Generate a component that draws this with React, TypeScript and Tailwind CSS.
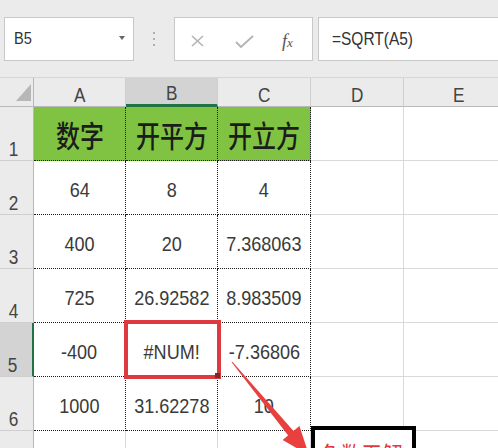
import React from 'react';

const NUM = "font-['Liberation_Sans',Arial,sans-serif]";
const CJK = "font-['Noto_Sans_CJK_SC','Noto_Sans',sans-serif]";

function S({ children, className = '' }: { children: React.ReactNode; className?: string }) {
  return <span className={`inline-block scale-x-[0.86] ${className}`}>{children}</span>;
}

const colW = ['w-[92px]', 'w-[92px]', 'w-[93px]', 'w-[93px]', 'w-[110px]'];
const letters = ['A', 'B', 'C', 'D', 'E'];

const data = [
  ['64', '8', '4'],
  ['400', '20', '7.368063'],
  ['725', '26.92582', '8.983509'],
  ['-400', '#NUM!', '-7.36806'],
  ['1000', '31.62278', '10'],
];

function Toolbar() {
  return (
    <div className="flex h-[78px] shrink-0 items-start border-b border-[#d6d6d6] bg-[#ebebeb] pl-[4px] pt-[17px]">
      <div className="relative flex h-[44px] w-[130px] shrink-0 items-center border border-[#c8c8c8] bg-white pl-[9px]">
        <S className={`origin-left text-[17px] text-[#333] ${NUM}`}>B5</S>
        <span className="absolute left-[114px] top-[18px] h-0 w-0 border-x-[3px] border-t-[4px] border-x-transparent border-t-[#666]" />
      </div>
      <div className="flex h-[44px] w-[40px] shrink-0 flex-col items-center justify-center gap-[4px]">
        <span className="h-[2px] w-[2px] rounded-full bg-[#9a9a9a]" />
        <span className="h-[2px] w-[2px] rounded-full bg-[#9a9a9a]" />
        <span className="h-[2px] w-[2px] rounded-full bg-[#9a9a9a]" />
      </div>
      <div className="relative h-[44px] w-[139px] shrink-0 border border-[#c8c8c8] bg-white">
        <svg className="absolute left-[15px] top-[17px]" width="15" height="12" viewBox="0 0 15 12">
          <path d="M2 1 L13 11 M13 1 L2 11" stroke="#b3b3b3" strokeWidth="1.6" fill="none" />
        </svg>
        <svg className="absolute left-[60px] top-[17px]" width="19" height="13" viewBox="0 0 19 13">
          <path d="M1 7 L6 12 L18 1" stroke="#b3b3b3" strokeWidth="1.8" fill="none" />
        </svg>
        <span className="absolute left-[107px] top-[10px] font-['Liberation_Serif',serif] text-[18px] italic text-[#555]">
          f<span className="text-[13px]">x</span>
        </span>
      </div>
      <div className="ml-[5px] flex h-[44px] w-[200px] shrink-0 items-center border border-[#c8c8c8] bg-white pl-[13px]">
        <S className={`origin-left text-[18px] text-[#333] ${NUM}`}>=SQRT(A5)</S>
      </div>
    </div>
  );
}

function HeaderRow() {
  return (
    <div className="flex h-[29px] shrink-0">
      <div className="relative w-[34px] shrink-0 border-r border-b border-[#b9b9b9] bg-[#ebebeb]">
        <svg className="absolute left-[16px] top-[6px]" width="15" height="17" viewBox="0 0 15 17">
          <path d="M15 0 L15 17 L0 17 Z" fill="#b7b7b7" />
        </svg>
      </div>
      {letters.map((l, i) => (
        <div
          key={l}
          className={`${colW[i]} flex shrink-0 items-end justify-center border-r border-r-[#cfcfcf] ${
            i === 1 ? 'border-b-[3px] border-b-[#217346] bg-[#d3d3d3]' : 'border-b border-b-[#b9b9b9] bg-[#ebebeb]'
          }`}
        >
          <S className={`text-[20px] leading-[22px] text-[#444] ${NUM}`}>{l}</S>
        </div>
      ))}
    </div>
  );
}

function RowHead({ n, active }: { n: number; active?: boolean }) {
  return (
    <div
      className={`flex w-[34px] shrink-0 items-end justify-center border-b border-[#cfcfcf] pr-[6px] ${
        active ? 'border-r-[2px] border-r-[#217346] bg-[#d3d3d3]' : 'border-r border-r-[#b9b9b9] bg-[#ebebeb]'
      }`}
    >
      <S className={`text-[20px] leading-[22px] text-[#444] ${NUM}`}>{n}</S>
    </div>
  );
}

function EmptyCells() {
  return (
    <>
      <div className={`${colW[3]} shrink-0 border-r border-b border-[#d9d9d9] bg-white`} />
      <div className={`${colW[4]} shrink-0 border-r border-b border-[#d9d9d9] bg-white`} />
    </>
  );
}

export default function App() {
  return (
    <div className="relative h-[448px] w-[498px] overflow-hidden bg-white">
      <Toolbar />
      <HeaderRow />

      <div className="flex h-[54px]">
        <RowHead n={1} />
        {['数字', '开平方', '开立方'].map((t, i) => (
          <div
            key={t}
            className={`${colW[i]} flex shrink-0 items-center justify-center border-r border-b border-dotted border-[#1a1a1a] bg-[#80c342]`}
          >
            <span className={`inline-block scale-x-[0.8] text-[30px] font-medium leading-none text-[#1c1c1c] ${CJK}`}>{t}</span>
          </div>
        ))}
        <EmptyCells />
      </div>

      {data.map((row, r) => (
        <div key={r} className="flex h-[54px]">
          <RowHead n={r + 2} active={r === 3} />
          {row.map((v, i) => (
            <div
              key={i}
              className={`${colW[i]} relative flex shrink-0 items-center justify-center border-r border-b border-dotted border-[#1a1a1a] bg-white pt-[4px]`}
            >
              <S className={`text-[21px] text-[#3a3a3a] ${NUM}`}>{v}</S>
              {r === 3 && i === 1 && (
                <div className="absolute -top-[3px] -left-[2px] -right-[4px] -bottom-[3px] z-10 border-4 border-[#dc3a3f]">
                  <span className="absolute -right-[3px] -bottom-[3px] h-[5px] w-[5px] bg-[#7a2a2a]" />
                </div>
              )}
            </div>
          ))}
          <EmptyCells />
        </div>
      ))}

      <div className="flex h-[40px]">
        <div className="w-[34px] shrink-0 border-r border-[#b9b9b9] bg-[#ebebeb]" />
        <div className={`${colW[0]} shrink-0 border-r border-[#d9d9d9]`} />
        <div className={`${colW[1]} shrink-0 border-r border-[#d9d9d9]`} />
        <div className={`${colW[2]} shrink-0 border-r border-[#d9d9d9]`} />
        <div className={`${colW[3]} shrink-0 border-r border-[#d9d9d9]`} />
      </div>

      <svg className="pointer-events-none absolute inset-0 z-20" width="498" height="448" viewBox="0 0 498 448">
        <polygon points="231.6,362.3 232.4,361.7 294.2,431.8 288.8,436.2" fill="#e8403f" />
        <polygon points="309,455 282.6,440.1 299.4,425.9" fill="#e8403f" />
      </svg>

      <div className="absolute left-[311px] top-[426px] z-30 h-[40px] w-[105px] border-4 border-black bg-white pl-[5px] pt-[12px]">
        <span className={`inline-block origin-left scale-x-[0.86] text-[24px] leading-none whitespace-nowrap text-[#e0393e] ${CJK}`}>
          负数无解
        </span>
      </div>
    </div>
  );
}
